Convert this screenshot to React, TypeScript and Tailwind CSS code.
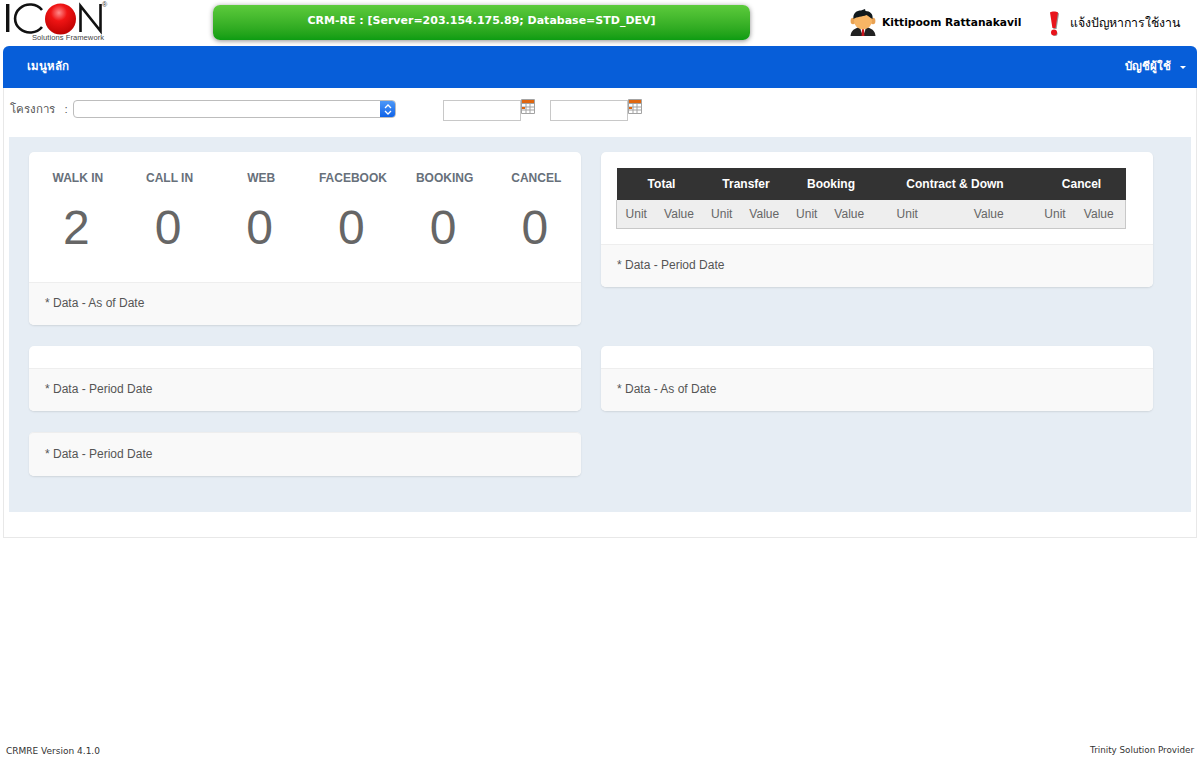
const sans = "font-['Liberation_Sans','Noto_Sans',sans-serif]";

function Logo() {
  return (
    <svg width="104" height="42" viewBox="0 0 104 42" className="block">
      <defs>
        <radialGradient id="ball" cx="0.45" cy="0.3" r="0.75">
          <stop offset="0" stopColor="#ff8a8a" />
          <stop offset="0.35" stopColor="#f01414" />
          <stop offset="1" stopColor="#b80000" />
        </radialGradient>
      </defs>
      <rect x="1" y="3" width="3.4" height="28" fill="#111" />
      <path d="M37 9 A15 14 0 1 0 37 26" fill="none" stroke="#111" strokeWidth="2.6" />
      <circle cx="55.5" cy="18" r="15.5" fill="url(#ball)" />
      <path d="M75.5 31 V5 L95.5 30 V3" fill="none" stroke="#111" strokeWidth="2.6" />
      <text x="99.5" y="6" fontSize="7" fill="#333" fontFamily="Liberation Sans" textAnchor="middle">®</text>
      <text x="27" y="39" fontSize="7.6" fill="#444" fontFamily="Liberation Sans" textLength="72">Solutions Framework</text>
    </svg>
  );
}

function PersonIcon() {
  return (
    <svg width="26" height="28" viewBox="0 0 26 28" className="block">
      <path d="M0.5 27 C1 21 5 19.5 9.5 18 L16.5 18 C21 19.5 25 21 25.5 27 Z" fill="#222" />
      <path d="M10 18 L13 21 L16 18 L15 22 L13 27 L11 22 Z" fill="#fff" />
      <path d="M12 20 H14 L14.4 27 H11.6 Z" fill="#c8141c" />
      <ellipse cx="3" cy="12" rx="2.4" ry="3.2" fill="#e9a253" />
      <ellipse cx="23" cy="12" rx="2.4" ry="3.2" fill="#e9a253" />
      <ellipse cx="13" cy="12" rx="9" ry="8.5" fill="#f7b565" />
      <path d="M3.5 10 C2.5 4 7 1.5 11 1.5 L15 0 L15.5 2 C20 2 23.5 5 22.5 10 C20 8.5 18 7 16.5 6 C12 8 7 7.5 3.5 10 Z" fill="#10181c" />
    </svg>
  );
}

function AlertIcon() {
  return (
    <svg width="12" height="25" viewBox="0 0 12 25" className="block">
      <path d="M3 2.5 C5 1.3 9 1.3 11 2.5 L8.6 18 H5.4 Z" fill="#999" />
      <circle cx="7" cy="22.5" r="2.5" fill="#999" />
      <path d="M2 1.5 C4 0.3 8 0.3 10 1.5 L7.6 17 H4.4 Z" fill="#e8141c" />
      <circle cx="6" cy="21.5" r="3" fill="#e8141c" />
    </svg>
  );
}

function CalendarIcon() {
  return (
    <svg width="14" height="15" viewBox="0 0 14 15" className="-mt-px block">
      <rect x="0" y="0" width="14" height="15" rx="1" fill="#a3a3a3" />
      <rect x="1" y="1" width="12" height="3" fill="#e0660f" />
      <rect x="1" y="5" width="12" height="9" fill="#fff" />
      <path d="M5 5 V14 M9 5 V14 M1 8 H13 M1 11 H13" stroke="#a3a3a3" strokeWidth="1" />
      <rect x="1" y="8" width="3" height="2" fill="#e0660f" />
    </svg>
  );
}

function DateField() {
  return (
    <div className="flex items-start">
      <div className="h-[21px] w-[78px] border border-[#c8c8c8] bg-white" />
      <CalendarIcon />
    </div>
  );
}

function CardFooter({ text, height }: { text: string; height: string }) {
  return (
    <div className={`flex items-center rounded-b-[5px] border-t border-[#eeeeee] bg-[#f9f9f9] pb-[2px] pl-4 text-xs text-[#555555] ${height}`}>
      {text}
    </div>
  );
}

const STATS = [
  { label: "WALK IN", value: 2 },
  { label: "CALL IN", value: 0 },
  { label: "WEB", value: 0 },
  { label: "FACEBOOK", value: 0 },
  { label: "BOOKING", value: 0 },
  { label: "CANCEL", value: 0 },
];

const COLUMNS = [
  { title: "Total", width: "w-[86px] pl-[4px]" },
  { title: "Transfer", width: "w-[85px] pl-[2px]" },
  { title: "Booking", width: "w-[85px] pl-[2px]" },
  { title: "Contract & Down", width: "w-[163px] pl-[2px]" },
  { title: "Cancel", width: "w-[90px] pl-[2px]" },
];

const card = "rounded-[5px] bg-white shadow-[0_1px_2px_rgba(0,0,0,0.1)]";

export default function App() {
  return (
    <div className={`flex h-[764px] flex-col bg-white text-xs ${sans}`}>
      {/* Header */}
      <div className="flex h-[46px] items-center">
        <div className="ml-[5px] w-[208px] self-start pt-[1px]">
          <Logo />
        </div>
        <div className="mb-px flex h-[35px] w-[537px] items-center justify-center rounded-[7px] bg-gradient-to-b from-[#5ccb3c] to-[#0b9c12] pb-[3px] font-['DejaVu_Sans',sans-serif] text-[11px] font-bold text-white shadow-[0_1px_5px_rgba(0,0,0,0.45)]">
          CRM-RE : [Server=203.154.175.89; Database=STD_DEV]
        </div>
        <div className="ml-[100px] flex items-center">
          <PersonIcon />
          <span className="ml-[6px] font-['DejaVu_Sans',sans-serif] text-[10.7px] font-bold text-black">Kittipoom Rattanakavil</span>
        </div>
        <div className="ml-[27px] flex items-center">
          <AlertIcon />
          <span className="ml-[10px] font-['DejaVu_Sans','Noto_Sans',sans-serif] text-[12.3px] font-medium text-black">แจ้งปัญหาการใช้งาน</span>
        </div>
      </div>

      {/* Main frame */}
      <div className="mx-[3px] h-[492px] rounded-t-[6px] border border-t-0 border-[#e8e8e8]">
        <div className="-mx-px flex h-[42px] items-center justify-between rounded-t-[6px] bg-[#075ed9] pl-6 pr-[11px] text-[11.5px] font-bold text-white">
          <span>เมนูหลัก</span>
          <div className="flex items-center">
            <span>บัญชีผู้ใช้</span>
            <span className="ml-[9px] mt-[2px] h-0 w-0 border-x-[3px] border-t-[3px] border-x-transparent border-t-white" />
          </div>
        </div>

        {/* Filters */}
        <div className="flex h-[49px] items-start pl-[6px] pt-[12px]">
          <span className="w-[63px] whitespace-pre text-[11.5px] leading-[18px] text-[#555555]">โครงการ   :</span>
          <div className="flex h-[18px] w-[323px] overflow-hidden rounded-[4px] border border-[#bdbdbd] bg-white">
            <div className="flex-1" />
            <div className="flex w-[15px] items-center justify-center bg-gradient-to-b from-[#4c98f8] to-[#0c62e8]">
              <svg width="8" height="13" viewBox="0 0 8 13" className="block">
                <path d="M1 5 L4 2 L7 5 M1 8 L4 11 L7 8" fill="none" stroke="#fff" strokeWidth="1.3" />
              </svg>
            </div>
          </div>
          <div className="ml-[47px]">
            <DateField />
          </div>
          <div className="ml-[15px]">
            <DateField />
          </div>
        </div>

        {/* Dashboard panel */}
        <div className="mx-[5px] h-[375px] bg-[#e6edf4] pl-5 pt-[15px]">
          <div className="grid w-[1124px] grid-cols-[552px_552px] gap-x-5">
            <div className="flex flex-col gap-[21px]">
              <div className={card}>
                <div className="flex h-[130px] pl-[3px] pt-[18px]">
                  {STATS.map((s) => (
                    <div key={s.label} className="flex w-[91.7px] shrink-0 flex-col items-center">
                      <span className="text-xs leading-[17px] font-bold text-[#67707a]">{s.label}</span>
                      <span className="mr-[3px] mt-[14px] text-[48px] leading-[54px] text-[#666666]">{s.value}</span>
                    </div>
                  ))}
                </div>
                <CardFooter text="* Data - As of Date" height="h-[43px]" />
              </div>
              <div className={card}>
                <div className="h-[22px]" />
                <CardFooter text="* Data - Period Date" height="h-[43px]" />
              </div>
              <div className={card}>
                <CardFooter text="* Data - Period Date" height="h-[44px] rounded-t-[5px]" />
              </div>
            </div>

            <div className="flex flex-col gap-[59px]">
              <div className={card}>
                <div className="h-[92px] pl-[15px] pt-4">
                  <table className="w-[510px] table-fixed border-collapse">
                    <thead>
                      <tr className="h-[32px] bg-[#333333] text-white">
                        {COLUMNS.map((c) => (
                          <th key={c.title} colSpan={2} className={`text-xs font-bold ${c.width}`}>
                            {c.title}
                          </th>
                        ))}
                      </tr>
                    </thead>
                    <tbody>
                      <tr className="h-[28px] border border-t-0 border-[#c8c8c8] bg-[#eeeeee] text-center text-xs text-[#666666]">
                        <td className="w-[39px] pr-[4px]">Unit</td>
                        <td className="w-[47px] pr-[4px]">Value</td>
                        <td className="w-[39px] pr-[4px]">Unit</td>
                        <td className="w-[46px] pr-[4px]">Value</td>
                        <td className="w-[39px] pr-[4px]">Unit</td>
                        <td className="w-[46px] pr-[4px]">Value</td>
                        <td className="w-[72px] pr-[12px]">Unit</td>
                        <td className="w-[91px] pr-[12px]">Value</td>
                        <td className="w-[44px] pr-[6px]">Unit</td>
                        <td className="w-[46px] pr-[8px]">Value</td>
                      </tr>
                    </tbody>
                  </table>
                </div>
                <CardFooter text="* Data - Period Date" height="h-[43px]" />
              </div>
              <div className={card}>
                <div className="h-[22px]" />
                <CardFooter text="* Data - As of Date" height="h-[43px]" />
              </div>
            </div>
          </div>
        </div>
      </div>

      {/* Footer */}
      <div className="mt-auto flex h-[26px] items-start justify-between px-[6px] pt-[7px] font-['DejaVu_Sans',sans-serif] text-[9px] text-[#333333]">
        <span>CRMRE Version 4.1.0</span>
        <span className="text-[8.75px]">Trinity Solution Provider</span>
      </div>
    </div>
  );
}
